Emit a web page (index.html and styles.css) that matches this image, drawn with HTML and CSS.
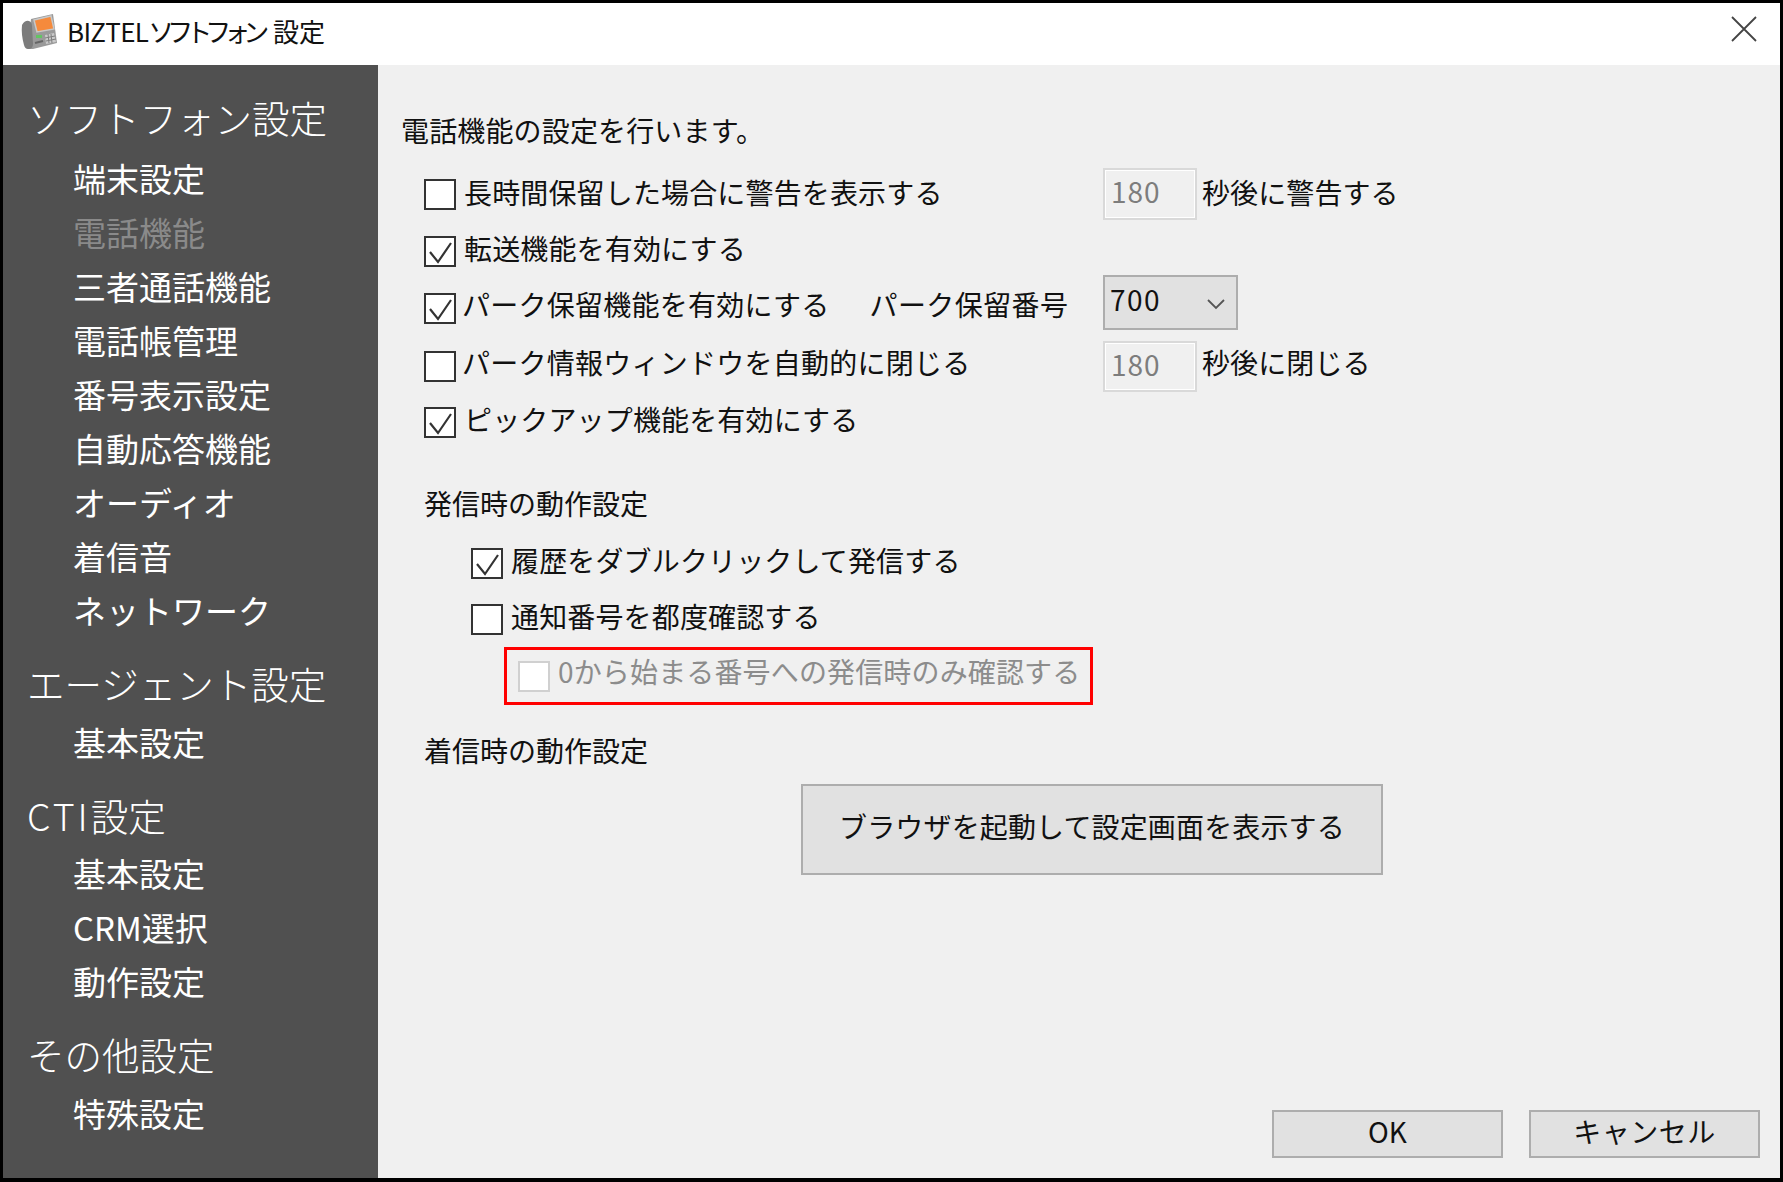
FILE: index.html
```html
<!DOCTYPE html>
<html lang="ja">
<head>
<meta charset="utf-8">
<title>BIZTELソフトフォン 設定</title>
<link rel="stylesheet" href="styles.css">
</head>
<body>
<div class="window">
  <header class="titlebar">
    <svg class="app-icon" width="40" height="40" viewBox="0 0 40 40">
      <path d="M12 7 L34 2 L38 31 L14 37 L9 37 Z" fill="#9a9a9a"/>
      <path d="M3 13 Q6 8 10 9 Q13 10 13 14 L14 32 Q14 37 9 37 Q6 37 5 33 Q2 22 3 13Z" fill="#7c7c7c"/>
      <path d="M15 8 L32 4 L35 17 L18 20Z" fill="#f58a3c" stroke="#c8c8c8" stroke-width="1.5"/>
      <rect x="17" y="23" width="6" height="3" fill="#63c463"/>
      <path d="M26 23 L35 21 L37 30 L27 32Z" fill="#c9c9c9"/>
      <path d="M29 22 L30 31 M32 22 L33 31 M26 26 L36 24 M27 29 L37 27" stroke="#7f7f7f" stroke-width="1"/>
      <path d="M16 31 L24 29" stroke="#666" stroke-width="2"/>
    </svg>
    <span class="app-title"><span class="brand">BIZTEL</span><span class="narrow">ソフトフォン</span> 設定</span>
    <svg class="close" width="26" height="26" viewBox="0 0 26 26"><path d="M1 1 L25 25 M25 1 L1 25" stroke="#444" stroke-width="1.8" fill="none"/></svg>
  </header>
  <div class="body">
    <nav class="sidebar">
      <div class="group">
        <div class="nav-head">ソフトフォン設定</div>
        <div class="nav-item">端末設定</div>
        <div class="nav-item current">電話機能</div>
        <div class="nav-item">三者通話機能</div>
        <div class="nav-item">電話帳管理</div>
        <div class="nav-item">番号表示設定</div>
        <div class="nav-item">自動応答機能</div>
        <div class="nav-item">オーディオ</div>
        <div class="nav-item">着信音</div>
        <div class="nav-item">ネットワーク</div>
      </div>
      <div class="group">
        <div class="nav-head">エージェント設定</div>
        <div class="nav-item">基本設定</div>
      </div>
      <div class="group group-cti">
        <div class="nav-head"><span class="latin-wide">CTI</span>設定</div>
        <div class="nav-item">基本設定</div>
        <div class="nav-item">CRM選択</div>
        <div class="nav-item">動作設定</div>
      </div>
      <div class="group">
        <div class="nav-head">その他設定</div>
        <div class="nav-item">特殊設定</div>
      </div>
    </nav>
    <main class="content">
      <p class="line intro">電話機能の設定を行います。</p>
      <div class="options">
        <div class="row row-1">
          <div class="check-label"><span class="box"></span><span class="label">長時間保留した場合に警告を表示する</span></div>
          <input class="num" type="text" value="180" disabled><span class="suffix">秒後に警告する</span>
        </div>
        <div class="row row-2">
          <div class="check-label"><span class="box"><svg width="27" height="27" viewBox="0 0 27 27"><path d="M3 14 L11 24 L24 5" fill="none" stroke="#333" stroke-width="2.2"/></svg></span><span class="label">転送機能を有効にする</span></div>
        </div>
        <div class="row row-3">
          <div class="check-label"><span class="box"><svg width="27" height="27" viewBox="0 0 27 27"><path d="M3 14 L11 24 L24 5" fill="none" stroke="#333" stroke-width="2.2"/></svg></span><span class="label tight">パーク保留機能を有効にする</span><span class="label park-no">パーク保留番号</span></div>
          <div class="select"><span class="select-value">700</span><svg width="18" height="11" viewBox="0 0 18 11"><path d="M1 1 L9 9 L17 1" fill="none" stroke="#555" stroke-width="1.8"/></svg></div>
        </div>
        <div class="row row-4">
          <div class="check-label"><span class="box"></span><span class="label tight">パーク情報ウィンドウを自動的に閉じる</span></div>
          <input class="num" type="text" value="180" disabled><span class="suffix">秒後に閉じる</span>
        </div>
        <div class="row row-5">
          <div class="check-label"><span class="box"><svg width="27" height="27" viewBox="0 0 27 27"><path d="M3 14 L11 24 L24 5" fill="none" stroke="#333" stroke-width="2.2"/></svg></span><span class="label">ピックアップ機能を有効にする</span></div>
        </div>
      </div>
      <p class="line section section-out">発信時の動作設定</p>
      <div class="sub">
        <div class="row sub-1">
          <div class="check-label"><span class="box"><svg width="27" height="27" viewBox="0 0 27 27"><path d="M3 14 L11 24 L24 5" fill="none" stroke="#333" stroke-width="2.2"/></svg></span><span class="label">履歴をダブルクリックして発信する</span></div>
        </div>
        <div class="row sub-2">
          <div class="check-label"><span class="box"></span><span class="label">通知番号を都度確認する</span></div>
        </div>
        <div class="highlight">
          <span class="box disabled"></span><span class="label muted">0から始まる番号への発信時のみ確認する</span>
        </div>
      </div>
      <p class="line section section-in">着信時の動作設定</p>
      <button class="btn browser" type="button">ブラウザを起動して設定画面を表示する</button>
      <div class="footer">
        <button class="btn action" type="button">OK</button>
        <button class="btn action cancel" type="button">キャンセル</button>
      </div>
    </main>
  </div>
</div>
</body>
</html>
```

FILE: styles.css
```css
* { box-sizing: border-box; }
html, body { margin: 0; height: 100%; }
body {
  background: #000;
  padding: 3px 3px 4px;
  font-family: "Noto Sans CJK JP", "Noto Sans", sans-serif;
  font-size: 28px;
  color: #111;
  overflow: hidden;
}
.window { display: flex; flex-direction: column; height: 100%; background: #f0f0f0; }

.titlebar { display: flex; align-items: center; height: 62px; background: #fff; padding: 0 23px 0 16px; flex: none; }
.app-icon { flex: none; margin-top: -4px; }
.app-title { margin-left: 8px; font-size: 26px; line-height: 1; margin-top: -6px; color: #111; }
.brand { letter-spacing: -0.7px; }
.narrow { letter-spacing: -7px; margin-right: 5px; }
.close { margin-left: auto; margin-top: -10px; }

.body { display: flex; flex: 1; min-height: 0; }
.sidebar { width: 375px; flex: none; background: #505050; color: #fff; padding: 25px 0 0 24px; }
.group + .group { margin-top: 19px; }
.nav-head { font-size: 37.5px; line-height: 54px; height: 54px; margin-bottom: 5px; font-weight: 300; }
.group:first-child .nav-head { margin-bottom: 7px; }
.group-cti .nav-head { margin-bottom: 4px; }
.latin-wide { letter-spacing: 3px; }
.nav-item { font-size: 33px; line-height: 54px; height: 54px; padding-left: 46px; }
.nav-item.current { color: #8a8a8a; }

.content { flex: 1; display: flex; flex-direction: column; padding: 46px 20px 20px 23px; min-width: 0; }
.line { margin: 0; height: 40px; line-height: 38px; white-space: nowrap; }
.intro { margin-bottom: 17px; letter-spacing: 0.15px; }
.options { padding-left: 23px; }
.row { display: flex; align-items: center; }
.check-label { display: flex; align-items: center; width: 679px; flex: none; }
.box { width: 32px; height: 31px; flex: none; background: #fff; border: 2px solid #333; display: flex; align-items: center; justify-content: center; }
.box.disabled { border-color: #d0d0d0; }
.label { margin-left: 8px; white-space: nowrap; line-height: 40px; letter-spacing: 0.15px; padding-bottom: 7px; }
.tight { letter-spacing: 0.25px; margin-left: 6px; }
.park-no { margin-left: 40px; letter-spacing: 0.4px; }
.muted { color: #8c8c8c; padding-bottom: 10px; }

.row-1 .label { padding-bottom: 5px; }
.row-1 { height: 52px; }
.row-2 { height: 31px; margin-top: 16px; }
.row-3 { height: 55px; margin-top: 8px; }
.row-3 .box { margin-top: 11px; }
.row-3 .label { margin-top: 5px; padding-bottom: 3px; }
.row-4 { height: 51px; margin-top: 11px; }
.row-4 .label { padding-bottom: 9px; }
.row-5 { height: 31px; margin-top: 15px; }

.num { width: 94px; height: 100%; border: 2px solid #d9d9d9; box-shadow: inset 0 0 0 1px #fff; background: #f0f0f0; color: #7d7d7d; font: inherit; letter-spacing: 1px; padding: 0 6px 7px; outline: 0; }
.suffix { margin-left: 5px; white-space: nowrap; padding-bottom: 5px; letter-spacing: 0.1px; }
.row-4 .suffix { padding-bottom: 9px; }
.row-4 .num { padding-bottom: 6px; }
.select { width: 135px; height: 100%; display: flex; align-items: center; justify-content: space-between; background: #e1e1e1; border: 2px solid #adadad; padding: 0 11px 0 5px; }
.select-value { letter-spacing: 1.5px; padding-bottom: 8px; }
.select svg { margin-top: 4px; }

.section-out { margin: 46px 0 0 23px; }
.sub { padding-left: 70px; }
.sub-1 { height: 31px; margin-top: 24px; }
.sub-2 { height: 31px; margin-top: 25px; }
.highlight { display: flex; align-items: center; width: 589px; height: 58px; margin: 12px 0 0 33px; border: 3px solid #f00; padding-left: 11px; }
.section-in { margin: 28px 0 0 23px; line-height: 35px; }

.btn { background: #e1e1e1; border: 2px solid #adadad; font: inherit; color: #111; padding: 0; }
.browser { width: 582px; height: 91px; margin: 11px 0 0 400px; flex: none; padding-bottom: 8px; letter-spacing: 0.15px; }
.footer { margin-top: auto; display: flex; justify-content: flex-end; gap: 26px; }
.action { width: 231px; height: 48px; line-height: 1; padding-bottom: 6px; }
.cancel { letter-spacing: 0.5px; }
```
